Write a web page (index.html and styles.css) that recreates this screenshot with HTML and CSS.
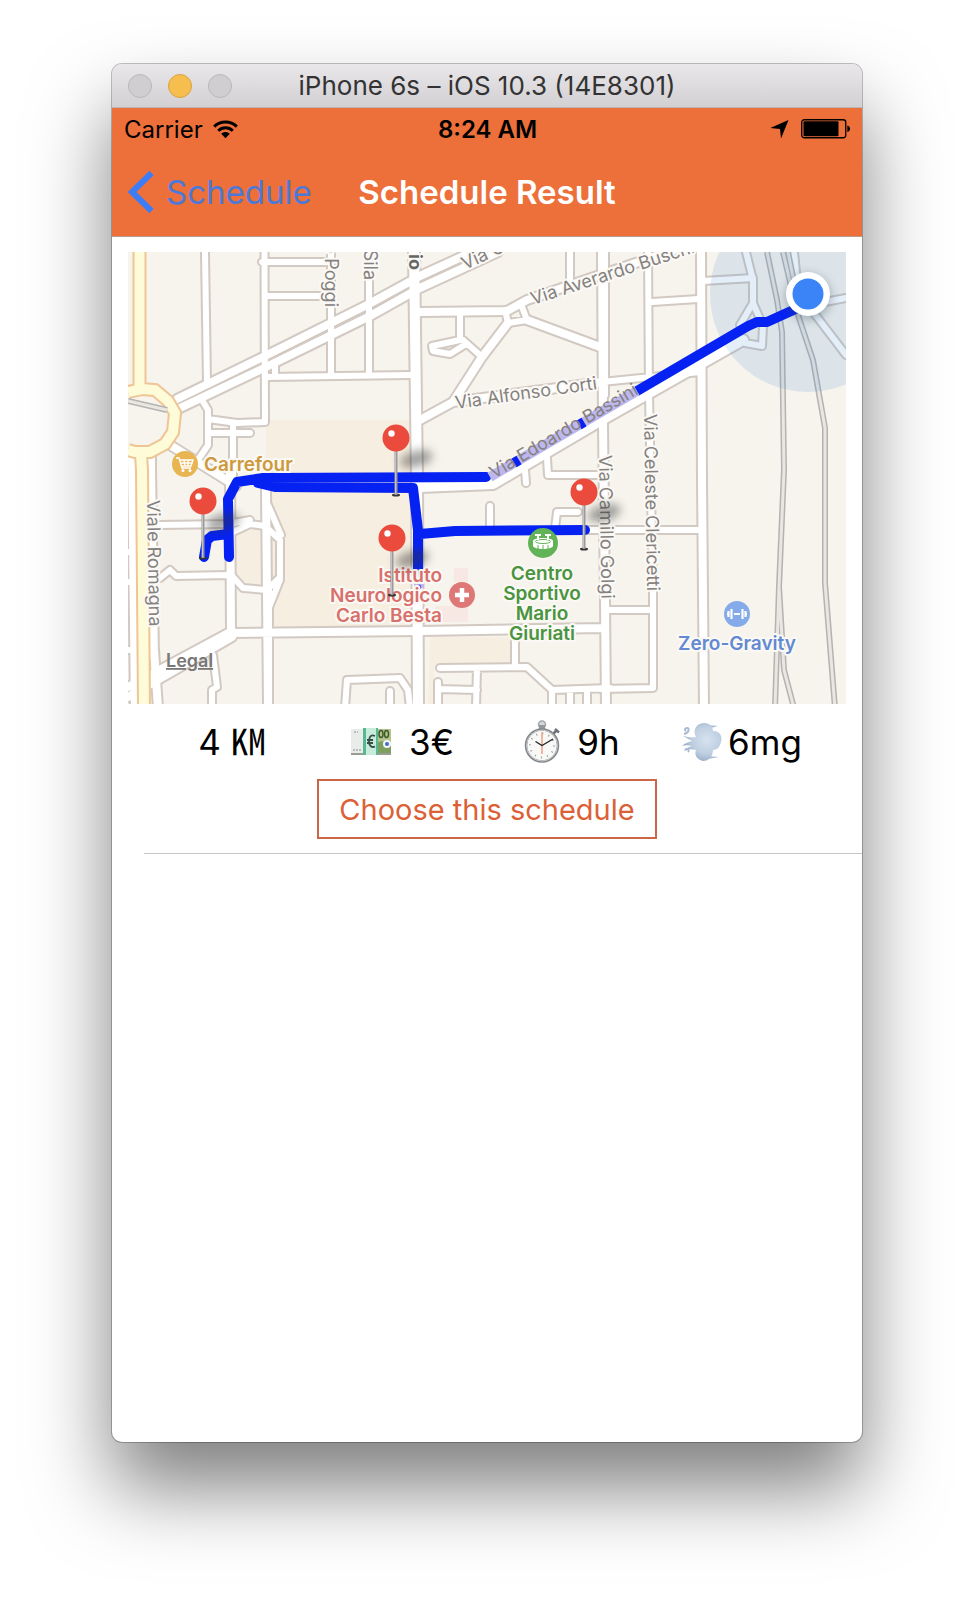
FILE: index.html
```html
<!DOCTYPE html>
<html lang="en">
<head>
<meta charset="utf-8">
<meta name="viewport" content="width=device-width, initial-scale=1">
<title>Schedule Result</title>
<link rel="stylesheet" href="styles.css">
</head>
<body>
<main class="window">
  <div class="titlebar">
    <div class="lights">
      <button class="light" aria-label="Close"></button>
      <button class="light light-min" aria-label="Minimize"></button>
      <button class="light" aria-label="Zoom"></button>
    </div>
    <div class="window-title">iPhone 6s – iOS 10.3 (14E8301)</div>
    <div></div>
  </div>
  <header class="header">
    <div class="status">
      <div class="status-left">
        <span>Carrier</span>
        <svg width="25" height="19" viewBox="0 0 25 19" aria-hidden="true">
          <g fill="none" stroke="#000" stroke-width="3">
            <path d="M1.2 6.6C7.5 .4 17.500 .4 23.800 6.600"/>
            <path d="M5.200 10.800C9.300 6.800 15.700 6.800 19.800 10.800"/>
          </g>
          <path d="M8.200 13.800C10.600 11.400 14.400 11.400 16.800 13.800L12.500 18.300Z"/>
        </svg>
      </div>
      <div class="clock">8:24 AM</div>
      <div class="status-right">
        <svg width="19" height="19" viewBox="0 0 19 19" aria-hidden="true"><path d="M18.500 0L11 18.500L10 9L.3 8Z"/></svg>
        <svg width="50" height="20" viewBox="0 0 50 20" aria-hidden="true">
          <rect x=".75" y=".75" width="44" height="18" rx="2.500" fill="none" stroke="#000" stroke-width="1.300"/>
          <rect x="2.500" y="2.300" width="35" height="15" rx="1"/>
          <path d="M46.300 6.500C50 7 50 12.500 46.300 13Z"/>
        </svg>
      </div>
    </div>
    <nav class="nav">
      <a class="back" href="#">
        <svg width="26" height="42" viewBox="0 0 26 42" aria-hidden="true"><path d="M23.500 2L4 21L23.500 40" fill="none" stroke="#3a7df6" stroke-width="6"/></svg>
        <span>Schedule</span>
      </a>
      <h1 class="nav-title">Schedule Result</h1>
      <div></div>
    </nav>
  </header>
  <section class="card">
    <svg class="map" viewBox="128 252 718 452" role="img" aria-label="Map of the route">
      <defs>
        <path id="minor" d="M205 252L207 382M264.500 252L265 422L237 423L208 419M202 400L208 410V445L200 457M210 433H250M233 423V475M262 262H327M267 296H323M331 252V375M369 252V375M267 377L410 375M275 362V377M460 315V340L432 346L433 351L450 354L466 344M463 340L482 357M505 310L508 323L527 320L522 307M570 252V284M648 252L649 395L653 590V688L600 689M607 610H652M652 302L698 299M602 382L700 372M547 458L548 475H600M525 470L526 483M490 506V530M555 528L557 512H578M586 530H701M160 525L228 524L250 520M233 532L250 524L265 526L280 540V577L267 590L243 588L233 577M266 490L267 522M268 505L281 535M280 580L268 610M160 578L170 570L176 576L230 575M213 655L217 687L212 690V704M345 708L347 680L400 678L408 690L410 708M390 691V708M515 633V667M440 668L527 667L552 690L610 688M477 668L476 708M438 682V708M438 689L477 690M552 690V708M570 690V708M587 690V708M128 552H134M128 582H134M128 650H134M703 281L753 278M746 252L753 280V303L740 325M753 303L763 326L762 346L745 343M794 252L798 292L846 355M825 302L846 298M605 395V252"/>
        <path id="medium" d="M177 399L263 357L367 305L420 276L472 252M178 409L262 369L370 316L420 288L498 252M420 312L507 311L527 300L600 275L680 248M508 323L482 357L453 402L420 420M527 320L600 347M602 252L603 425L605 600L606 708M701 252L702 480L704 708M170 445L236 486M231 633L420 631L603 628M266 490L268 704M230 470L231 630M268 590V708M232 631L128 687M232 637L128 697M151 456V470L154 657M132 456L135 708M154 650L158 708M453 402L602 382"/>
        <path id="major" d="M414 252L417 480L418 708M420 487L493 484L600 421L743 340"/>
        <path id="yellow" d="M139.500 246V390M128 392L142 389L155 390L168 401L175 413L173 432L165 444L150 452L135 452L128 450M141 454L142 470L144 708"/>
        <path id="rail" d="M767 252L777 300L782 332L784 470L779 587L775 708M779 587L784 670L794 708M783 252L797 312L813 360L825 428V583L835 708M788 252L800 312M128 401L167 410"/>
        <filter id="blur" x="-50%" y="-80%" width="200%" height="260%"><feGaussianBlur stdDeviation="5"/></filter>
        <g id="pin">
          <ellipse cx="20" cy="21" rx="17" ry="8" fill="#333" opacity=".45" transform="rotate(-15 20 21)" filter="url(#blur)"/>
          <ellipse cx="0" cy="57" rx="4" ry="1.500" fill="#333"/>
          <path d="M0 10V57" stroke="#9b999b" stroke-width="3"/>
          <path d="M-.5 12V56" stroke="#c4c2c4"/>
          <circle r="13.500" fill="#ea4b3c"/>
          <circle cx="-4.500" cy="-4.500" r="3.200" fill="#fff"/>
        </g>
      </defs>

      <rect x="128" y="252" width="718" height="452" fill="#f7f4ed"/>
      <path fill="#f6eee0" d="M266 420H412L416 628L270 632L281 580V540L266 510ZM236 534L265 526L280 540V577L267 590L236 585ZM430 637H511V667H434V704H428Z"/>
      <path fill="#f8e8e4" d="M454 568H468V582H454ZM435 606H468V622H435Z"/>

      <g class="casing"><use href="#minor" class="w-minor"/><use href="#medium" class="w-medium"/><use href="#major" class="w-major"/></g>
      <g class="road"><use href="#minor" class="w-minor"/><use href="#medium" class="w-medium"/><use href="#major" class="w-major"/></g>
      <use href="#yellow" class="yellow-casing"/>
      <use href="#yellow" class="yellow-road"/>
      <use href="#rail" class="rail-outer"/>
      <use href="#rail" class="rail-inner"/>
      <circle cx="808" cy="294" r="98" fill="#3c8ad8" opacity=".14"/>

      <g class="route">
        <path d="M637 391L748 326L757 322L767 322L800 307"/>
        <path d="M486 477L263 478L237 482L228 499L229 557M258 483L275 487L413 488L418 530V572M420 534L455 531L585 530M204 557L207 540L212 536L228 534"/>
        <path class="route-pale" d="M490 477L637 391M418.500 577L419 588"/>
        <path class="route-cut" d="M514 463L519 460M579 425L584 422"/>
        <path class="route-dots" d="M417 580L420 590"/>
      </g>

      <g class="street">
        <text transform="translate(456 409) rotate(-8)">Via Alfonso Corti</text>
        <text class="on-route" transform="translate(494 479) rotate(-30.500)">Via Edoardo Bassini</text>
        <text transform="translate(533 305) rotate(-18)">Via Averardo Buschi</text>
        <text transform="translate(465 270) rotate(-25)">Via C</text>
        <text transform="translate(644 414) rotate(89)">Via Celeste Clericetti</text>
        <text transform="translate(599 455) rotate(89)">Via Camillo Golgi</text>
        <text transform="translate(147 500) rotate(89)">Viale Romagna</text>
        <text transform="translate(325 307) rotate(90)" text-anchor="end">e Poggi</text>
        <text transform="translate(364 280) rotate(90)" text-anchor="end">Sila</text>
        <text class="strong" transform="translate(409 270) rotate(90)" text-anchor="end">io</text>
      </g>

      <circle cx="185" cy="464" r="13" fill="#e8b552"/>
      <path d="M176 458H179L182 468H191M180 460H193L191 466H182M184 460L185 466M188 460V466M180 463H192" fill="none" stroke="#fff" stroke-width="1.400"/>
      <circle cx="183" cy="470.500" r="1.500" fill="#fff"/><circle cx="190" cy="470.500" r="1.500" fill="#fff"/>
      <circle cx="543" cy="543" r="15" fill="#62b357"/>
      <path d="M533 541C533 537 553 537 553 541V546C552 550 534 550 533 546Z" fill="#fff"/>
      <g fill="none" stroke="#62b357">
        <ellipse cx="543" cy="541.500" rx="7.500" ry="2"/>
        <path d="M538 545V549M543 545V549M548 545V549"/>
      </g>
      <path d="M535 535H541M538 535V540M545 535H551M548 535V540" stroke="#fff" stroke-width="2"/>
      <circle cx="462" cy="595" r="13" fill="#dd7877"/>
      <path d="M455 595H469M462 588V602" stroke="#fff" stroke-width="4.500"/>
      <circle cx="737" cy="614" r="13" fill="#85aae9"/>
      <path d="M728.500 611V617M731.500 609V619M742.500 609V619M745.500 611V617" stroke="#fff" stroke-width="2.200"/>
      <path d="M727 614H729M734 614H740M745 614H747" stroke="#fff" stroke-width="2"/>

      <g class="poi">
        <text class="food" x="204" y="471">Carrefour</text>
        <g class="health" text-anchor="end"><text x="442" y="582">Istituto</text><text x="442" y="602">Neurologico</text><text x="442" y="622">Carlo Besta</text></g>
        <g class="sport" text-anchor="middle"><text x="542" y="580">Centro</text><text x="542" y="600">Sportivo</text><text x="542" y="620">Mario</text><text x="542" y="640">Giuriati</text></g>
        <text class="gym" text-anchor="middle" x="737" y="650">Zero-Gravity</text>
      </g>
      <a href="#"><text class="legal" x="166" y="667">Legal</text></a>

      <use href="#pin" x="396" y="438"/>
      <use href="#pin" x="203" y="501"/>
      <use href="#pin" x="392" y="538"/>
      <use href="#pin" x="584" y="492"/>
      <circle cx="808" cy="297" r="23" fill="#345" opacity=".35" filter="url(#blur)"/>
      <circle cx="808" cy="294" r="22" fill="#fff"/>
      <circle cx="808" cy="294" r="15.500" fill="#3a84f7"/>
    </svg>

    <div class="stats">
      <div class="stat"><span>4 <span class="unit">㏎</span></span></div>
      <div class="stat">
        <svg width="42" height="28" viewBox="0 0 42 28" aria-hidden="true">
          <path d="M1 24H41V27H1Z" fill="#9a9c98"/>
          <path d="M1 1H15V25H1Z" fill="#e9ece8"/>
          <path d="M27 1H41V25H27Z" fill="#b4c48c"/>
          <path d="M27 15C31 12 36 13 41 17V25H27Z" fill="#7f9f60"/>
          <path d="M3 22H12M4 4H8" stroke="#aaa" stroke-width="1.500" stroke-dasharray="2 1"/>
          <path d="M13 0H28V27H13Z" fill="#58b893"/>
          <path d="M16 0H26V27H16Z" fill="#c9ebda"/>
          <path d="M25 8C20 6 19 10 19 13.500C19 18 22 20 25 18.500M17 12H23M17 15H23" fill="none" stroke="#354f46" stroke-width="1.800"/>
          <g fill="none" stroke="#405c2c" stroke-width="1.500"><ellipse cx="31" cy="6" rx="2" ry="3.500"/><ellipse cx="36.500" cy="6" rx="2" ry="3.500"/></g>
          <circle cx="37" cy="16" r="4" fill="#f3f7fb"/><circle cx="37" cy="16" r="2" fill="#3f71c4"/>
        </svg>
        <span>3€</span>
      </div>
      <div class="stat">
        <svg width="36" height="44" viewBox="0 0 36 44" aria-hidden="true">
          <circle cx="18" cy="4.500" r="3.500" fill="#d5d7d9" stroke="#a3a5a8" stroke-width="1.500"/>
          <path d="M15 5H21V10H15Z" fill="#94979a"/>
          <path d="M29 14L33 10M31 9L35 12.500" stroke="#6c7177" stroke-width="2.500"/>
          <circle cx="18" cy="25.500" r="16" fill="#f8f8f7" stroke="#84888d" stroke-width="2.500"/>
          <circle cx="18" cy="25.500" r="15.500" fill="none" stroke="#c7cacd"/>
          <circle cx="18" cy="25.500" r="12" fill="none" stroke="#999" stroke-width="2" stroke-dasharray="1 5.283"/>
          <path d="M18 12V34" stroke="#f0a283" stroke-width="1.500"/>
          <path d="M11.500 21.500L18 25.500L29 19" fill="none" stroke="#222" stroke-width="1.300"/>
        </svg>
        <span>9h</span>
      </div>
      <div class="stat stat-tight">
        <svg width="40" height="40" viewBox="0 0 40 40" aria-hidden="true">
          <defs>
            <radialGradient id="puff" cx=".62" cy=".45" r=".6"><stop offset="0" stop-color="#d6e2ef"/><stop offset=".6" stop-color="#bfcfe1"/><stop offset="1" stop-color="#94abc6"/></radialGradient>
          </defs>
          <path d="M26 3L36 4L29 6ZM24 34L37 35L26 37Z" fill="#a9bcd4"/>
          <path d="M1 14C6 15 9 16 14 15C10 8 15 1 22 1C27 1 31 4 31 9C37 8 41 14 39 20C38 25 35 28 31 28C31 34 27 39 21 39C15 38 12 33 14 28C9 27 6 27 2 29C4 26 7 25 10 24C6 23 3 23 0 24C3 21 7 20 10 19C7 17 4 16 1 14Z" fill="url(#puff)"/>
          <path d="M2 12C7 11 8 6 5 6C3 6 2 8 4 9M3 28C5 26 8 28 6 30" fill="none" stroke="#a9bcd4" stroke-width="2"/>
        </svg>
        <span>6mg</span>
      </div>
    </div>
    <button class="choose">Choose this schedule</button>
  </section>
</main>
</body>
</html>
```
FILE: styles.css
```css
* { box-sizing: border-box; }

body {
  display: flex;
  flex-direction: column;
  min-height: 100vh;
  margin: 0;
  padding: 64px 112px 160px;
  overflow-x: hidden;
  background: #fff;
  color: #000;
  font-family: Inter, "Liberation Sans", sans-serif;
}

button { font: inherit; }

.window {
  flex: 1;
  border-radius: 10px;
  background: #fff;
  box-shadow: 0 0 0 1px rgba(0, 0, 0, .24), 0 46px 80px rgba(0, 0, 0, .5);
}

.titlebar {
  display: grid;
  grid-template-columns: 1fr auto 1fr;
  align-items: center;
  height: 44px;
  padding: 0 16px;
  border-bottom: 1px solid #b9b5b9;
  border-radius: 10px 10px 0 0;
  background: linear-gradient(#e9e7e9, #d2d0d2);
}

.lights { display: flex; gap: 16px; }

.light {
  width: 24px;
  height: 24px;
  padding: 0;
  border: 1px solid #b9b7b9;
  border-radius: 50%;
  background: #d0ced0;
}

.light-min { border-color: #dba13c; background: #f6be4f; }

.window-title { color: #333; font-size: 26px; }

.header {
  height: 129px;
  border-bottom: 1px solid #bf9a8a;
  background: #ed6f3a;
}

.status {
  display: grid;
  grid-template-columns: 1fr auto 1fr;
  align-items: center;
  height: 42px;
  padding: 0 11px 0 12px;
  font-size: 24px;
}

.status-left { display: flex; align-items: center; gap: 10px; }
.status-right { display: flex; align-items: center; justify-content: flex-end; gap: 12px; }
.clock { font-weight: 600; }

.nav {
  display: grid;
  grid-template-columns: 1fr auto 1fr;
  align-items: center;
  height: 84px;
  padding: 0 16px;
}

.back {
  display: flex;
  align-items: center;
  gap: 12px;
  color: #4a79d8;
  font-size: 33px;
  text-decoration: none;
}

.nav-title { margin: 0; color: #fff; font-size: 33px; font-weight: 600; }

.card {
  display: flex;
  flex-direction: column;
  align-items: center;
  margin-left: 32px;
  padding: 15px 16px 14px 0;
  border-bottom: 1px solid #c8c7cc;
}

.map { display: block; align-self: stretch; margin-left: -16px; }

.casing, .road, .route { fill: none; stroke-linejoin: round; stroke-linecap: round; }
.casing { stroke: #d2c9c2; }
.casing .w-minor { stroke-width: 10px; }
.casing .w-medium { stroke-width: 12px; }
.casing .w-major { stroke-width: 14px; }
.road { stroke: #fff; }
.road .w-minor { stroke-width: 6px; }
.road .w-medium { stroke-width: 8px; }
.road .w-major { stroke-width: 10px; }
.yellow-casing { fill: none; stroke: #efc595; stroke-width: 14px; }
.yellow-road { fill: none; stroke: #fdfbd8; stroke-width: 10px; }
.rail-outer { fill: none; stroke: #b5b2b0; stroke-width: 6px; }
.rail-inner { fill: none; stroke: #e9e7e2; stroke-width: 3px; }

.route { stroke: #0622f3; stroke-width: 10px; }
.route .route-pale { stroke: #bdb7ee; stroke-linecap: butt; }
.route .route-cut { stroke-linecap: butt; }
.route .route-dots { stroke-width: 4px; stroke-dasharray: 1 6; }

.street { fill: #85817f; font-size: 18px; }
.street text, .poi text {
  paint-order: stroke;
  stroke: #fbf9f5;
  stroke-width: 4px;
  stroke-linejoin: round;
}
.street .on-route { stroke: none; }
.street .strong { fill: #666; font-weight: 700; }

.poi { font-size: 19px; font-weight: 600; }
.poi .food { fill: #cc9a3d; }
.poi .health { fill: #d8706c; }
.poi .sport { fill: #4a9440; }
.poi .gym { fill: #6389d2; }
.legal { fill: #777; font-size: 18px; font-weight: 600; text-decoration: underline; }

.stats {
  display: grid;
  grid-template-columns: repeat(4, 1fr);
  align-self: stretch;
  align-items: center;
  height: 75px;
  margin: 0 19px 0 3px;
  font-size: 35px;
}

.stat { display: flex; align-items: center; justify-content: center; gap: 17px; }
.stat-tight { gap: 6px; }
.unit { font-family: "Noto Sans CJK JP", sans-serif; line-height: 1; }

.choose {
  height: 60px;
  margin-right: 16px;
  padding: 0 20px;
  border: 2px solid #cb6747;
  background: #fff;
  color: #dc6036;
  font-size: 29px;
}
```
